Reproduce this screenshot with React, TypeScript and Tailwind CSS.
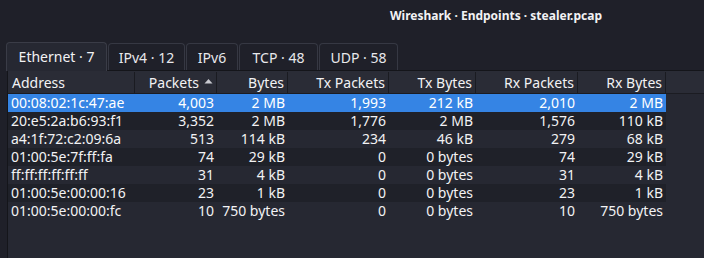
import React from 'react';

const tabs = [
  { label: 'Ethernet · 7', w: 'w-[101px]' },
  { label: 'IPv4 · 12', w: 'w-[77px]' },
  { label: 'IPv6', w: 'w-[52px]' },
  { label: 'TCP · 48', w: 'w-[79px]' },
  { label: 'UDP · 58', w: 'w-[79px]' },
];

const columns = [
  { label: 'Address', w: 'w-[127px]', left: true },
  { label: 'Packets', w: 'w-[82px]', sort: true },
  { label: 'Bytes', w: 'w-[71px]' },
  { label: 'Tx Packets', w: 'w-[101px]' },
  { label: 'Tx Bytes', w: 'w-[87px]' },
  { label: 'Rx Packets', w: 'w-[102px]' },
  { label: 'Rx Bytes', w: 'w-[88px]' },
];

const rows = [
  ['00:08:02:1c:47:ae', '4,003', '2 MB', '1,993', '212 kB', '2,010', '2 MB'],
  ['20:e5:2a:b6:93:f1', '3,352', '2 MB', '1,776', '2 MB', '1,576', '110 kB'],
  ['a4:1f:72:c2:09:6a', '513', '114 kB', '234', '46 kB', '279', '68 kB'],
  ['01:00:5e:7f:ff:fa', '74', '29 kB', '0', '0 bytes', '74', '29 kB'],
  ['ff:ff:ff:ff:ff:ff', '31', '4 kB', '0', '0 bytes', '31', '4 kB'],
  ['01:00:5e:00:00:16', '23', '1 kB', '0', '0 bytes', '23', '1 kB'],
  ['01:00:5e:00:00:fc', '10', '750 bytes', '0', '0 bytes', '10', '750 bytes'],
];

export default function App() {
  return (
    <div
      className="w-[704px] h-[258px] bg-[#1f2029] text-[#f2f2f4] overflow-hidden flex flex-col"
      style={{ fontFamily: '"Noto Sans", "Open Sans", sans-serif' }}
    >
      {/* title */}
      <div className="h-[42px] pl-[390px] pt-[7px] text-[12px] font-bold leading-[18px]">
        Wireshark · Endpoints · stealer.pcap
      </div>

      {/* tabs */}
      <div className="flex items-end pl-[6px] gap-[1px] h-[28px]">
        {tabs.map((t, i) => (
          <div
            key={t.label}
            className={
              i === 0
                ? `${t.w} h-[29px] -mb-px pt-[3px] text-center bg-[#262832] border border-b-0 border-[#3a3c47] rounded-t-[4px] text-[14px] z-10`
                : `${t.w} h-[27px] pt-[3px] text-center border border-b-0 border-[#363843] rounded-t-[4px] text-[14px] text-[#e8e8ec]`
            }
          >
            {t.label}
          </div>
        ))}
      </div>

      {/* pane */}
      <div className="flex-1 ml-[7px] bg-[#262832] border-l border-t border-[#14151a]">
        <div className="flex h-[23px] bg-[#2a2c36] border-b border-[#1b1c22] text-[14px] leading-[22px] pt-[1px]">
          {columns.map((c) => (
            <div
              key={c.label}
              className={`${c.w} shrink-0 border-r border-[#1a1b21] flex items-center ${c.left ? 'pl-[4px]' : 'justify-end pr-[3px]'}`}
            >
              {c.label}
              {c.sort && (
                <svg width="9" height="6" viewBox="0 0 9 6" className="ml-[5px] mb-[3px]">
                  <path d="M0.5 5.5 L4.5 1 L8.5 5.5 Z" fill="#c8c9d0" />
                </svg>
              )}
            </div>
          ))}
        </div>
        {rows.map((r, ri) => (
          <div
            key={r[0]}
            className={`flex w-[658px] h-[18px] text-[14px] leading-[18px] ${
              ri === 0 ? 'bg-[#3584e4] text-white' : ri % 2 === 1 ? 'bg-[#1f2129]' : 'bg-[#262832]'
            }`}
          >
            {columns.map((c, ci) => (
              <div
                key={c.label}
                className={`${c.w} shrink-0 whitespace-nowrap ${c.left ? 'pl-[3px]' : 'text-right pr-[3px]'}`}
              >
                {r[ci]}
              </div>
            ))}
          </div>
        ))}
      </div>
    </div>
  );
}
